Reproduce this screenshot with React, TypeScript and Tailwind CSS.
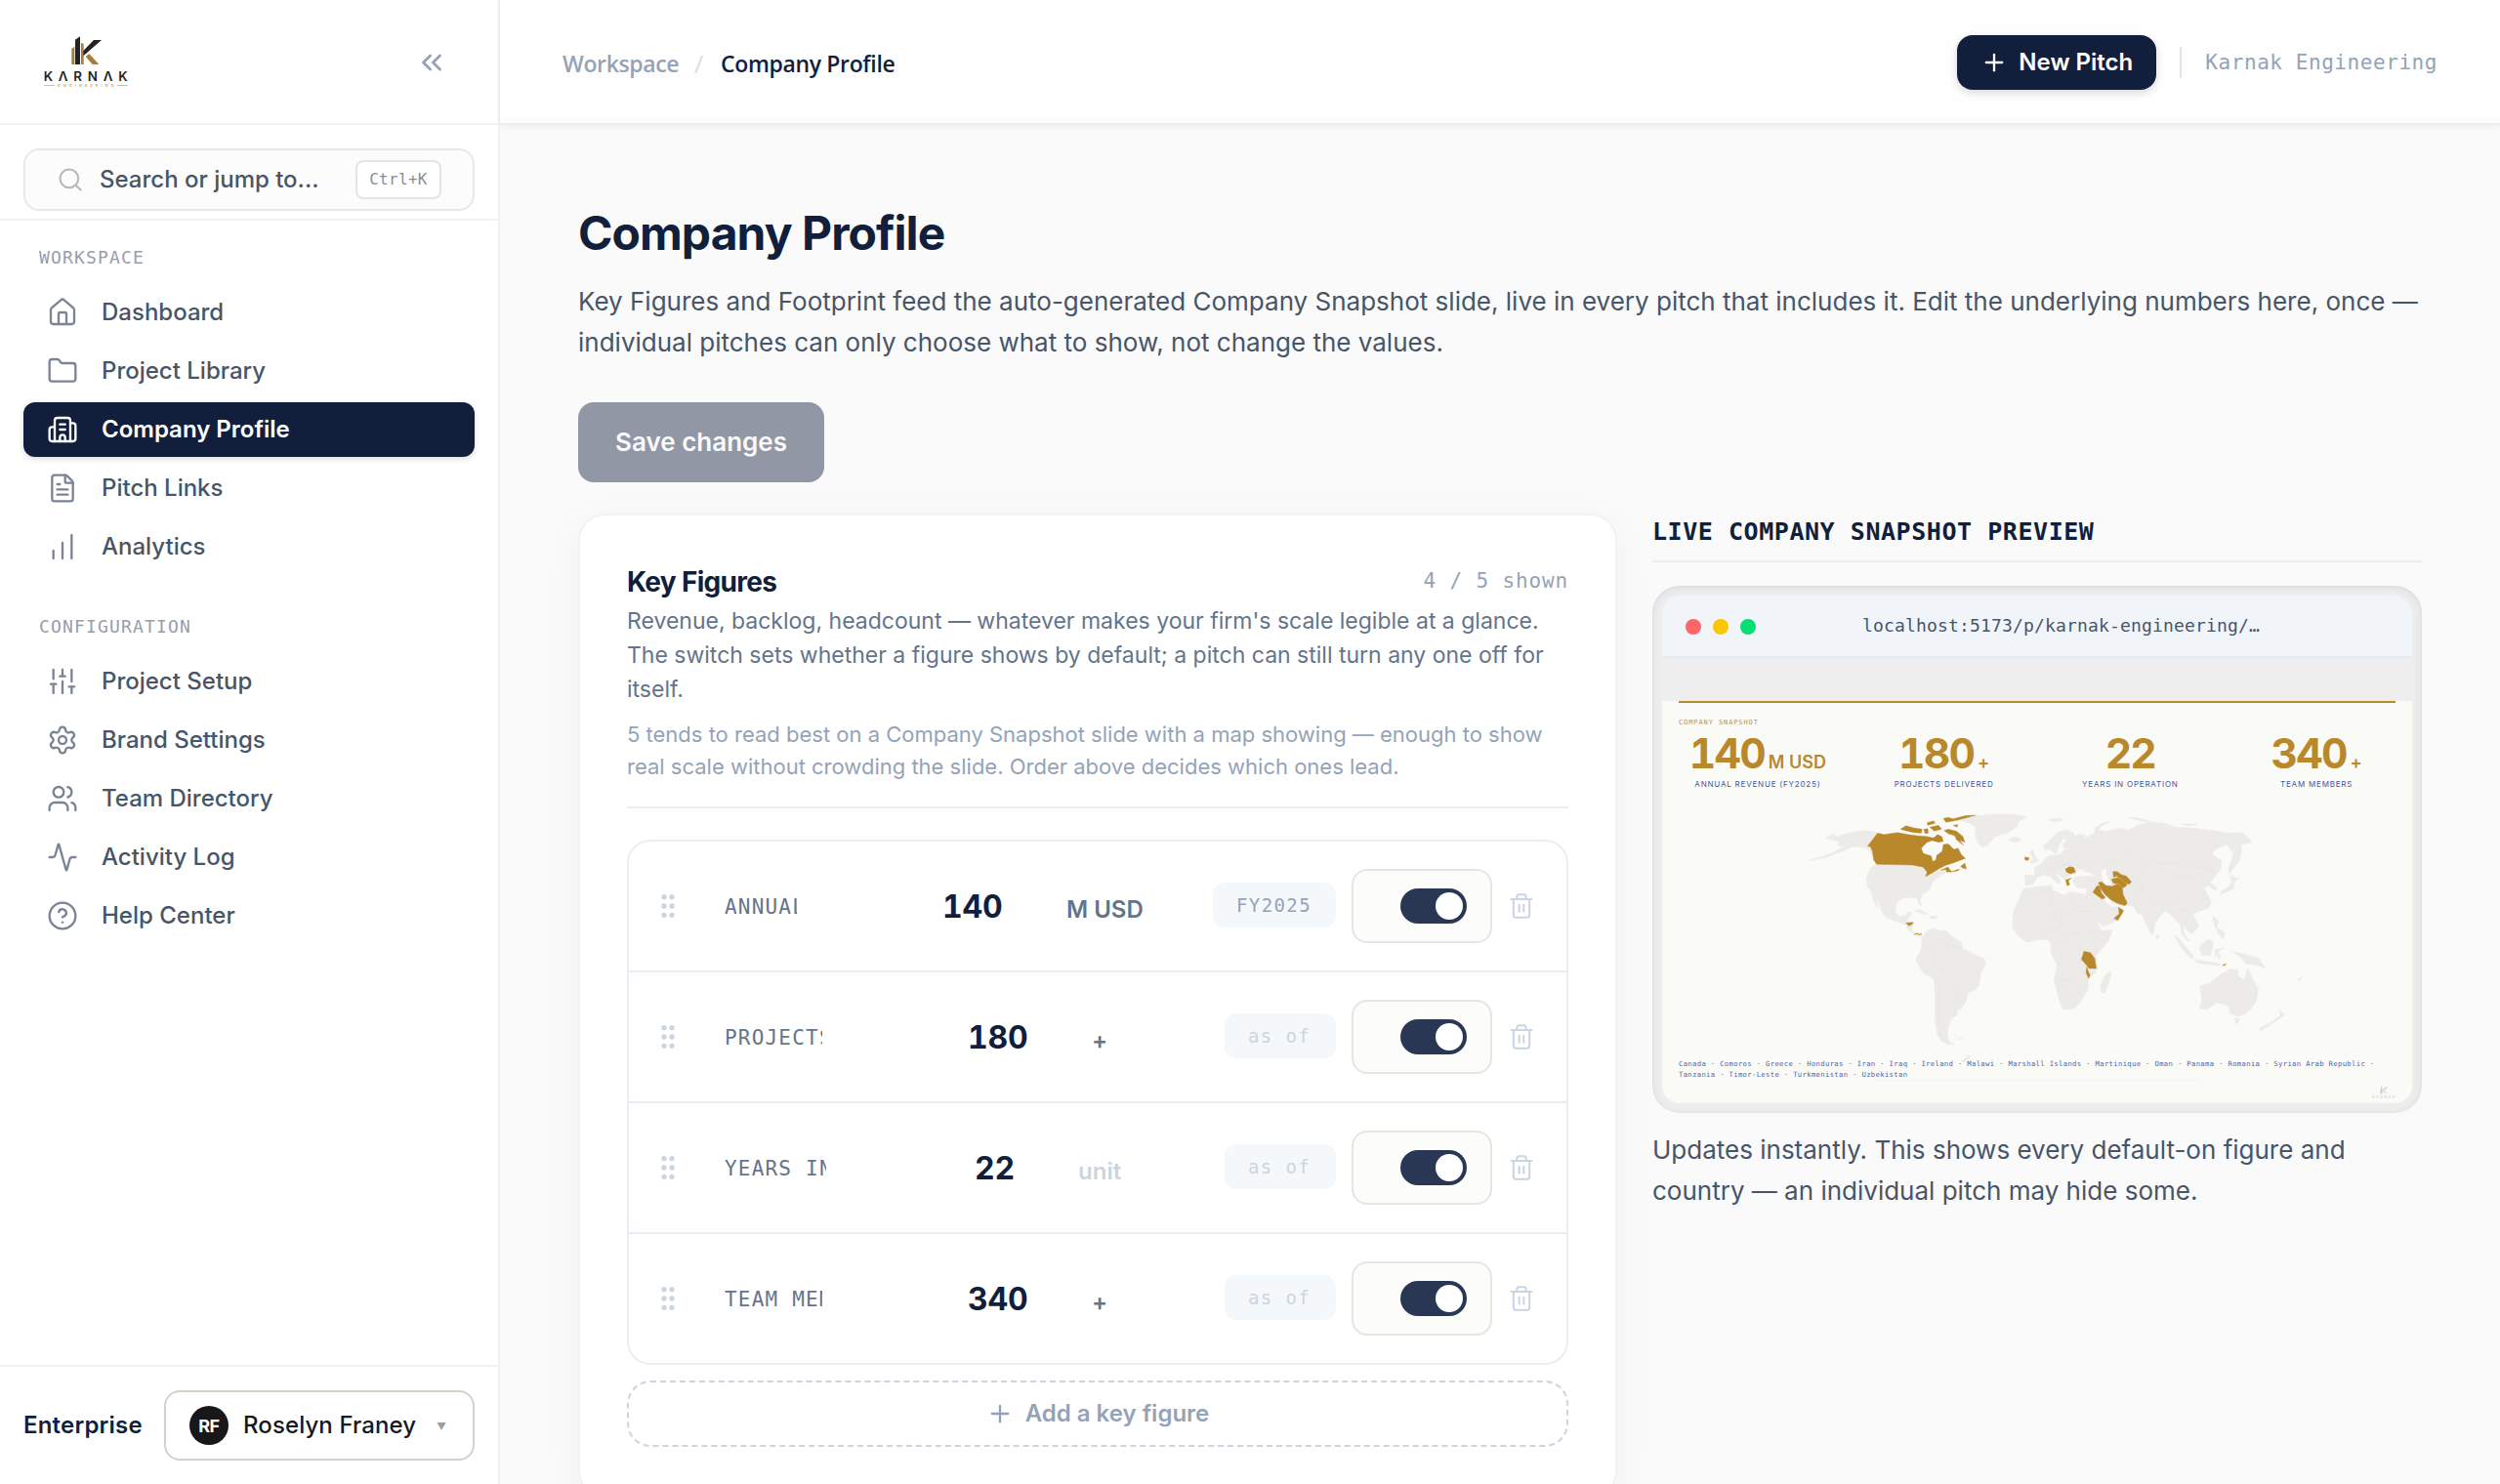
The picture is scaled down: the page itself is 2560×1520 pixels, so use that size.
import React from "react";
import {
  Activity,
  Building2,
  ChartNoAxesColumnIncreasing,
  ChevronsLeft,
  CircleQuestionMark,
  FileText,
  Folder,
  GripVertical,
  House,
  Plus,
  Search,
  Settings,
  SlidersVertical,
  Trash2,
  Users,
  type LucideIcon,
} from "lucide-react";

const MONO = "font-['DejaVu_Sans_Mono',monospace]";

function KarnakMark({ ink, gold }: { ink: string; gold: string }) {
  return (
    <g>
      <polygon points="220,150 229,143 229,198 220,198" fill={gold} />
      <polygon points="231,122 246,112 246,198 231,198" fill={ink} />
      <polygon points="249,131 257,135 257,198 249,198" fill={gold} />
      <polygon points="256,156 288,123 312,123 256,172" fill={ink} />
      <polygon points="263,174 274,165 304,198 284,198" fill={gold} />
    </g>
  );
}

function Logo() {
  return (
    <svg viewBox="132 108 264 162" className="h-[54px] w-[88px]" aria-label="Karnak Engineering">
      <KarnakMark ink="#242426" gold="#a87c3a" />
      <text x="134" y="248" fontFamily="Inter, sans-serif" fontSize="40" fontWeight="600" fill="#242426" textLength="258">
        KΛRNΛK
      </text>
      <rect x="135" y="261" width="33" height="2.5" fill="#cfb083" />
      <rect x="360" y="261" width="33" height="2.5" fill="#cfb083" />
      <text x="178" y="267" fontFamily="Inter, sans-serif" fontSize="12" fontWeight="600" fill="#c9a878" textLength="172">
        ENGINEERING
      </text>
    </svg>
  );
}

function NavItem({ icon: Icon, label, active }: { icon: LucideIcon; label: string; active?: boolean }) {
  return (
    <a
      className={
        active
          ? "flex h-[56px] items-center gap-[24px] rounded-[12px] bg-[#111f3d] px-[24px] text-white shadow-[0_2px_6px_rgba(0,0,0,0.14)]"
          : "flex h-[56px] items-center gap-[24px] rounded-[12px] px-[24px] text-[#475569]"
      }
    >
      <Icon size={32} strokeWidth={1.75} className={active ? "text-white" : "text-[#7a8496]"} />
      <span className={active ? "text-[24px] font-semibold leading-[32px]" : "text-[24px] font-medium leading-[32px]"}>
        {label}
      </span>
    </a>
  );
}

function NavHeading({ children }: { children: string }) {
  return (
    <div className={`${MONO} pl-[16px] text-[18px] leading-[24px] tracking-[1.16px] text-[#969eab]`}>{children}</div>
  );
}

function Sidebar() {
  return (
    <aside className="flex h-full w-[512px] shrink-0 flex-col border-r-2 border-[#f0f1f3] bg-white">
      <div className="flex h-[128px] items-center justify-between border-b-2 border-[#f0f1f3] pl-[44px] pr-[52px]">
        <Logo />
        <ChevronsLeft size={34} strokeWidth={2} className="-mr-px mt-[2px] text-[#94a3b8]" />
      </div>
      <div className="h-[98px] border-b-2 border-[#f0f1f3] px-[24px] pt-[24px]">
        <div className="flex h-[64px] w-[462px] items-center rounded-[16px] border-2 border-[#e8e8ea] bg-[#fcfcfc] pl-[32px] pr-[32px]">
          <Search size={28} strokeWidth={1.75} className="text-[#b5b7be]" />
          <span className="ml-[16px] flex-1 text-[24px] font-medium leading-[32px] text-[#475569]">
            Search or jump to...
          </span>
          <kbd
            className={`${MONO} flex h-[40px] w-[88px] items-center justify-center rounded-[8px] border-2 border-[#e4e4e7] bg-white text-[16px] font-normal tracking-[0.3px] text-[#8b8d96]`}
          >
            Ctrl+K
          </kbd>
        </div>
      </div>
      <nav className="flex flex-1 flex-col px-[24px] pt-[26px]">
        <NavHeading>WORKSPACE</NavHeading>
        <div className="mt-[16px] flex flex-col gap-[4px]">
          <NavItem icon={House} label="Dashboard" />
          <NavItem icon={Folder} label="Project Library" />
          <NavItem icon={Building2} label="Company Profile" active />
          <NavItem icon={FileText} label="Pitch Links" />
          <NavItem icon={ChartNoAxesColumnIncreasing} label="Analytics" />
        </div>
        <div className="mt-[42px]">
          <NavHeading>CONFIGURATION</NavHeading>
        </div>
        <div className="mt-[16px] flex flex-col gap-[4px]">
          <NavItem icon={SlidersVertical} label="Project Setup" />
          <NavItem icon={Settings} label="Brand Settings" />
          <NavItem icon={Users} label="Team Directory" />
          <NavItem icon={Activity} label="Activity Log" />
          <NavItem icon={CircleQuestionMark} label="Help Center" />
        </div>
      </nav>
      <div className="flex h-[122px] items-center justify-between border-t-2 border-[#f0f1f3] px-[24px]">
        <span className="text-[24px] font-semibold leading-[32px] tracking-[0.2px] text-[#111f3d]">Enterprise</span>
        <div className="flex h-[72px] w-[318px] items-center rounded-[16px] border-2 border-[#d6d1c8] bg-white pl-[24px]">
          <span className="flex size-[40px] items-center justify-center rounded-full bg-[#18181b] text-[18px] font-bold tracking-[-0.5px] text-white">
            RF
          </span>
          <span className="ml-[15px] w-[181px] whitespace-nowrap text-[24px] font-medium leading-[32px] tracking-[0.1px] text-[#18181b]">
            Roselyn Franey
          </span>
          <span className="ml-[17px] mt-[2px] text-[10px] leading-none text-[#9b9da6]">▼</span>
        </div>
      </div>
    </aside>
  );
}

function TopBar() {
  return (
    <header className="z-10 flex h-[128px] shrink-0 items-center justify-between border-b-2 border-[#ededee] bg-[#fefefe] pl-[64px] pr-[64px] pt-[2px] shadow-[0_2px_6px_rgba(0,0,0,0.05)]">
      <div className="flex items-center pt-[2px] font-['Open_Sans',sans-serif] text-[23px] font-semibold leading-[32px] tracking-[-0.35px]">
        <span className="w-[135px] text-[#94a3b8]">Workspace</span>
        <span className="w-[27px] text-[25px] font-normal text-[#d8dee8]">/</span>
        <span className="text-[#111f3d]">Company Profile</span>
      </div>
      <div className="flex items-center">
        <button className="flex h-[56px] w-[204px] items-center gap-[11px] rounded-[16px] bg-[#111f3d] pl-[24px] text-[24px] font-semibold text-white shadow-[0_3px_8px_rgba(0,0,0,0.16)]">
          <Plus size={28} strokeWidth={2} className="shrink-0" />
          <span className="whitespace-nowrap">New Pitch</span>
        </button>
        <div className="mx-[24px] h-[32px] w-[2px] bg-[#e2e4e8]" />
        <span className={`${MONO} text-[21px] leading-[32px] tracking-[0.56px] text-[#94a3b8]`}>Karnak Engineering</span>
      </div>
    </header>
  );
}

type Figure = {
  label: string;
  labelClass: string;
  value: string;
  valueClass: string;
  unit: string;
  unitClass: string;
  asOf?: string;
};

const figures: Figure[] = [
  {
    label: "ANNUAL REVENUE",
    labelClass: "w-[74px] mr-[149px]",
    value: "140",
    valueClass: "w-[127px]",
    unit: "M USD",
    unitClass: "text-[#64748b]",
    asOf: "FY2025",
  },
  {
    label: "PROJECTS DELIVERED",
    labelClass: "w-[100px] mr-[149px]",
    value: "180",
    valueClass: "w-[127px]",
    unit: "+",
    unitClass: "text-[#64748b]",
  },
  {
    label: "YEARS IN OPERATION",
    labelClass: "w-[104px] mr-[152px]",
    value: "22",
    valueClass: "w-[106px]",
    unit: "unit",
    unitClass: "text-[#cbd5e1]",
  },
  {
    label: "TEAM MEMBERS",
    labelClass: "w-[100px] mr-[149px]",
    value: "340",
    valueClass: "w-[127px]",
    unit: "+",
    unitClass: "text-[#64748b]",
  },
];

function FigureRow({ figure }: { figure: Figure }) {
  return (
    <div className="flex h-[134px] items-center border-b-2 border-[#e8eef4] pl-[24px] pr-[32px] last:h-[132px] last:border-b-0">
      <GripVertical size={32} className="shrink-0 text-[#cbd5e1]" />
      <div
        className={`${MONO} ${figure.labelClass} ml-[42px] mt-[2px] shrink-0 overflow-hidden whitespace-nowrap text-[21px] leading-[32px] tracking-[1.2px] text-[#64748b]`}
      >
        {figure.label}
      </div>
      <div className="mt-[2px] flex items-baseline">
        <span
          className={`${figure.valueClass} text-[32px] font-bold leading-[40px] tabular-nums tracking-[-0.2px] text-[#111f3d]`}
        >
          {figure.value}
        </span>
        <span className={`${figure.unitClass} text-[24px] font-semibold leading-[32px]`}>{figure.unit}</span>
      </div>
      <div className="ml-auto flex items-center">
        <span
          className={
            figure.asOf
              ? `${MONO} mb-[2px] h-[46px] w-[126px] rounded-[12px] bg-[#f4f8fb] pl-[24px] text-[19px] leading-[46px] tracking-[1.4px] text-[#94a3b8]`
              : `${MONO} mb-[2px] h-[46px] w-[114px] rounded-[12px] bg-[#f4f8fb] pl-[24px] text-[19px] leading-[46px] tracking-[1.4px] text-[#cbd5e1]`
          }
        >
          {figure.asOf ?? "as of"}
        </span>
        <div className="ml-[16px] flex h-[76px] w-[144px] items-center justify-end rounded-[16px] border-2 border-[#e6e6e0] bg-[#fcfcfa] pr-[24px]">
          <div className="flex h-[36px] w-[68px] items-center justify-end rounded-full bg-[#2a3754] pr-[4px]">
            <div className="size-[28px] rounded-full bg-white" />
          </div>
        </div>
        <Trash2 size={28} strokeWidth={1.75} className="ml-[16px] text-[#cbd5e1]" />
      </div>
    </div>
  );
}

function KeyFiguresCard() {
  return (
    <section className="h-[1008px] w-[1064px] rounded-[28px] border-2 border-[#f2f2f3] bg-white p-[48px] shadow-[0_8px_40px_rgba(0,0,0,0.04)]">
      <div className="h-[252px] border-b-2 border-[#e8eef4]">
        <div className="flex h-[40px] justify-between">
          <h2 className="text-[28px] font-bold leading-[40px] tracking-[-0.7px] text-[#111f3d]">Key Figures</h2>
          <span className={`${MONO} text-[21px] leading-[38px] tracking-[0.85px] text-[#94a3b8]`}>4 / 5 shown</span>
        </div>
        <p className="mt-[3px] whitespace-nowrap text-[23px] leading-[34.8px] text-[#64748b]">
          Revenue, backlog, headcount — whatever makes your firm's scale legible at a glance.
          <br />
          The switch sets whether a figure shows by default; a pitch can still turn any one off for
          <br />
          itself.
        </p>
        <p className="mt-[13px] whitespace-nowrap text-[22px] leading-[32.2px] text-[#94a3b8]">
          5 tends to read best on a Company Snapshot slide with a map showing — enough to show
          <br />
          real scale without crowding the slide. Order above decides which ones lead.
        </p>
      </div>
      <div className="mt-[32px] rounded-[24px] border-2 border-[#e8eef4]">
        {figures.map((f) => (
          <FigureRow key={f.label} figure={f} />
        ))}
      </div>
      <button className="mt-[16px] flex h-[68px] w-full items-center justify-center gap-[12px] rounded-[24px] border-2 border-dashed border-[#cbd5e1] text-[24px] font-semibold text-[#94a3b8]">
        <Plus size={28} strokeWidth={2} />
        Add a key figure
      </button>
    </section>
  );
}

const LAND = [
  "570,145 590,133 605,142 640,128 690,122 728,128 697,170 712,185 716,205 700,180 680,172 650,172 630,182 600,192 570,205 515,214 560,202 600,185 625,172 605,168 612,156",
  "722,227 835,228 868,236 880,250 875,264 900,252 925,242 938,250 915,265 895,282 890,300 865,320 858,335 863,355 855,348 850,330 820,328 800,332 785,345 765,330 740,322 710,312 697,295 693,270 705,240",
  "710,312 740,322 765,330 785,345 782,372 795,388 815,382 822,372 832,375 825,390 815,400 838,404 838,412 832,425 840,436 862,440 864,448 845,444 825,430 812,410 780,400 750,385 735,355 722,325 730,362 714,338",
  "985,92 1000,82 1040,76 1100,72 1145,72 1185,80 1160,95 1155,112 1130,128 1090,140 1065,168 1050,174 1035,160 1028,135 1030,110 1005,98",
  "1130,148 1150,142 1168,148 1160,156 1138,156",
  "865,450 880,430 900,424 915,430 940,430 960,450 985,465 990,485 1020,500 1055,515 1060,530 1045,560 1040,595 1030,610 1005,622 1000,645 985,670 970,675 975,688 960,695 950,710 945,730 942,750 948,770 962,778 945,780 925,770 912,750 905,700 905,640 902,580 870,560 850,530 847,515 858,495 865,475",
  "840,368 860,365 885,380 868,379",
  "888,386 910,385 908,392 890,392",
  "1198,220 1206,206 1194,190 1205,180 1210,198 1225,215 1202,224",
  "1236,170 1260,150 1280,128 1310,120 1330,130 1338,152 1322,176 1302,178 1296,166 1310,146 1296,148 1284,172 1276,194 1266,186 1255,178 1244,184",
  "1180,258 1210,260 1212,250 1210,235 1230,225 1245,205 1260,200 1290,195 1300,182 1325,178 1330,150 1340,135 1365,135 1360,147 1395,130 1396,114 1420,98 1442,96 1415,108 1405,120 1430,125 1470,115 1500,120 1530,105 1565,95 1610,100 1640,112 1700,115 1760,122 1800,130 1850,128 1878,158 1845,165 1845,190 1840,215 1820,240 1808,255 1806,235 1815,215 1820,190 1800,165 1765,180 1755,195 1785,215 1782,240 1765,262 1748,280 1772,300 1762,305 1745,290 1730,300 1745,325 1753,345 1745,360 1710,372 1695,378 1705,395 1715,415 1695,440 1680,430 1665,410 1670,440 1685,460 1680,462 1662,440 1658,410 1645,400 1630,380 1610,370 1595,385 1580,410 1575,440 1568,440 1550,405 1542,380 1525,375 1515,355 1492,352 1470,350 1450,345 1435,325 1415,310 1430,345 1450,357 1468,356 1484,370 1465,398 1420,418 1405,400 1385,370 1370,340 1368,320 1372,300 1340,298 1325,275 1335,265 1350,262 1390,262 1370,250 1355,240 1340,255 1328,255 1310,265 1312,285 1295,265 1272,252 1292,278 1282,286 1260,265 1240,258 1218,265 1205,287 1182,290",
  "1175,302 1215,295 1262,290 1265,305 1300,320 1320,310 1370,320 1378,345 1400,395 1415,430 1450,428 1435,465 1400,505 1403,550 1375,580 1375,610 1350,650 1330,670 1297,672 1285,640 1270,580 1280,540 1260,495 1262,470 1245,455 1220,458 1185,465 1160,445 1142,420 1145,372 1160,340",
  "1413,600 1422,575 1442,553 1445,566 1435,600 1425,622 1414,618",
  "1718,600 1750,590 1780,565 1810,548 1835,550 1835,570 1855,580 1865,545 1878,575 1897,610 1890,650 1860,685 1835,692 1812,685 1805,660 1770,650 1740,670 1717,670 1725,640",
  "1825,700 1843,700 1830,718",
  "1962,672 1978,690 1955,705 1905,738 1901,730 1940,710 1965,690",
  "1640,445 1652,452 1672,475 1700,512 1692,515 1660,482",
  "1700,520 1740,524 1782,532 1775,538 1710,528",
  "1716,480 1745,455 1760,468 1750,505 1725,506",
  "1765,488 1790,484 1774,494 1782,514 1774,514 1768,500 1764,514",
  "1820,495 1850,500 1900,515 1918,545 1890,535 1860,532 1842,510",
  "1758,385 1775,400 1770,420 1795,435 1790,455 1775,438 1762,412",
  "1812,258 1832,270 1842,268 1825,278 1822,300 1790,315 1782,320 1784,308 1806,296 1816,280",
  "1585,438 1593,450 1585,456",
  "1250,88 1285,84 1300,90 1270,95",
  "1500,82 1530,84 1565,94 1540,94",
  "1660,102 1710,102 1690,107",
  "975,762 990,760 984,765",
  "985,832 1008,812 1012,818 995,834",
  "2018,578 2032,574 2024,584",
];

const WATER = [
  "1415,245 1432,240 1430,256 1446,290 1430,292 1418,270",
  "1338,246 1355,240 1362,250 1380,252 1392,262 1350,262 1338,258",
];

const GOLD = [
  "697,170 728,130 748,134 790,128 822,134 850,138 880,140 900,145 912,134 925,140 930,155 916,158 895,153 880,158 862,176 868,192 893,200 897,217 906,214 910,198 926,186 930,165 945,163 962,180 975,176 985,196 998,208 975,216 960,222 940,228 920,238 900,250 875,264 880,250 868,235 835,228 725,226 716,212 712,185 705,172",
  "932,122 945,118 970,124 990,140 996,158 980,152 992,168 970,150 965,138 946,132",
  "798,118 815,107 840,114 865,118 862,130 838,128 812,122",
  "930,85 945,82 960,86 1000,76 1030,75 1005,82 975,90 938,97",
  "880,98 900,92 905,100 882,106",
  "888,112 915,106 925,118 902,124",
  "870,118 882,116 884,130 874,132",
  "960,106 975,104 972,112",
  "983,232 996,222 1001,240 990,238",
  "922,244 944,234 955,248 940,250 938,242",
  "950,250 980,240 975,246",
  "1181,203 1194,206 1190,214 1180,212",
  "815,406 838,404 832,412 824,415",
  "1305,240 1318,233 1330,235 1336,250 1320,255 1308,250",
  "1306,274 1324,268 1314,276 1318,288 1310,292",
  "1389,312 1402,292 1410,294 1416,314 1428,328 1418,333",
  "1406,282 1416,280 1430,291 1448,293 1465,286 1480,293 1482,318 1495,345 1488,353 1465,346 1445,335 1425,317 1412,298",
  "1446,272 1466,266 1492,282 1494,290 1484,298 1468,286 1452,284",
  "1451,248 1464,248 1476,257 1492,262 1508,280 1500,288 1480,274 1462,262 1453,266",
  "1468,358 1484,368 1466,398 1454,392 1470,378",
  "1362,493 1382,497 1395,515 1400,546 1378,546 1368,534 1354,518",
  "1371,540 1375,555 1381,566 1376,576 1368,558",
  "1786,537 1798,531 1796,536",
];

const BORDERS = [
  "1145,372 1190,345 1235,415 1200,430 1160,420",
  "1190,345 1170,330 1262,300 1262,355 1290,375 1325,365 1325,330",
  "1235,415 1260,385 1290,375 1295,410 1270,430 1225,435",
  "1325,370 1395,370",
  "1295,410 1315,440 1300,470 1262,470",
  "1315,440 1360,435 1395,425 1440,450 1400,470 1395,505",
  "1300,470 1290,520 1275,545 1325,560 1355,520",
  "1270,578 1330,582 1355,560 1400,560",
  "1310,582 1315,635 1340,625 1365,605",
  "1403,250 1420,222 1470,212 1490,198 1560,225 1545,265 1510,265",
  "1565,225 1650,222 1700,235 1755,240 1690,265 1620,260 1565,228",
  "1690,222 1720,208 1755,240 1765,262",
  "1530,275 1550,310 1575,332 1625,345 1640,335 1660,370",
  "1500,290 1540,300 1525,330 1515,355",
  "1575,332 1600,350 1640,350",
  "1660,370 1690,365 1700,380",
  "1240,230 1265,240 1300,225 1335,225 1380,235",
  "1290,197 1300,225 1290,250",
  "1325,178 1340,205 1380,225",
  "885,440 900,460 935,465 960,450",
  "865,475 890,480 900,510 885,520 905,545 940,555 955,590 975,610",
  "902,580 915,600 950,605 975,620 970,650 1000,640",
  "915,600 915,700 925,765",
  "935,465 945,480 985,475",
];

function WorldMap() {
  return (
    <svg viewBox="117 60 2202 840" className="block h-[280px] w-[734px]">
      <g fill="#edebe7">
        {LAND.map((p) => (
          <polygon key={p} points={p} strokeLinejoin="round" stroke="#edebe7" strokeWidth="2" />
        ))}
      </g>
      <g fill="none" stroke="#e3e2dd" strokeWidth="1.5" strokeLinejoin="round">
        {BORDERS.map((p) => (
          <polyline key={p} points={p} />
        ))}
      </g>
      <g fill="#fafbf6">
        {WATER.map((p) => (
          <polygon key={p} points={p} />
        ))}
      </g>
      <g fill="#b8882b" stroke="#b8882b" strokeWidth="1">
        {GOLD.map((p) => (
          <polygon key={p} points={p} />
        ))}
      </g>
      <path d="M841 442l8-4 8 4 7-3" fill="none" stroke="#b8882b" strokeWidth="3" />
      <path d="M715 889H1715" stroke="#f4f4ef" strokeWidth="2" />
    </svg>
  );
}

const slideStats = [
  { value: "140", unit: "M USD", label: "ANNUAL REVENUE (FY2025)" },
  { value: "180", unit: "+", label: "PROJECTS DELIVERED" },
  { value: "22", unit: "", label: "YEARS IN OPERATION" },
  { value: "340", unit: "+", label: "TEAM MEMBERS" },
];

function SnapshotPreview() {
  return (
    <section className="w-[788px]">
      <h3
        className={`${MONO} h-[50px] border-b-2 border-[#ececed] text-[25px] font-bold leading-[38px] tracking-[0.55px] text-[#111f3d]`}
      >
        LIVE COMPANY SNAPSHOT PREVIEW
      </h3>
      <div className="mt-[24px] h-[540px] rounded-[28px] bg-[#ededed] p-[10px] shadow-[inset_0_2px_8px_rgba(0,0,0,0.07),inset_0_0_0_1px_rgba(0,0,0,0.02)]">
        <div className="flex h-[520px] flex-col overflow-hidden rounded-[18px] bg-[#eeeeee]">
          <div className="flex h-[64px] shrink-0 items-center border-b-2 border-[#e2eaf3] bg-[#f1f5fa] pl-[24px]">
            <div className="flex w-[181px] gap-[12px] pt-[2px]">
              <span className="size-[16px] rounded-full bg-[#ff6467]" />
              <span className="size-[16px] rounded-full bg-[#fdc700]" />
              <span className="size-[16px] rounded-full bg-[#05df72]" />
            </div>
            <span className={`${MONO} -mt-px text-[18px] leading-[24px] tracking-[0.16px] text-[#475569]`}>
              localhost:5173/p/karnak-engineering/…
            </span>
          </div>
          <div className="mt-[44px] flex h-[412px] flex-col bg-[#fafbf6] px-[17px]">
            <div className="h-[2px] bg-[#b8882b]" />
            <div className={`${MONO} mt-[15px] h-[10px] text-[7px] leading-[10px] tracking-[0.9px] text-[#c3933b]`}>
              COMPANY SNAPSHOT
            </div>
            <div className="mt-[2px] grid h-[68px] grid-cols-4 gap-x-[29px]">
              {slideStats.map((s) => (
                <div key={s.label} className="flex flex-col items-center whitespace-nowrap">
                  <div className="flex items-baseline gap-[4px] text-[#b8882b]">
                    <span className="text-[42.5px] font-bold leading-[50px] tabular-nums tracking-[-1.8px]">{s.value}</span>
                    {s.unit && <span className="text-[18px] font-semibold">{s.unit}</span>}
                  </div>
                  <div className="text-[8px] leading-[12px] tracking-[0.8px] text-[#3f57a3]">{s.label}</div>
                </div>
              ))}
            </div>
            <div className="-mb-[26px] mt-[15px]">
              <WorldMap />
            </div>
            <div className={`${MONO} whitespace-nowrap text-[7.2px] leading-[11px] tracking-[0.36px] text-[#4d64ac]`}>
              Canada · Comoros · Greece · Honduras · Iran · Iraq · Ireland · Malawi · Marshall Islands · Martinique · Oman ·
              Panama · Romania · Syrian Arab Republic ·
              <br />
              Tanzania · Timor-Leste · Turkmenistan · Uzbekistan
            </div>
            <div className="mt-[6px] flex justify-end">
              <svg viewBox="132 108 264 144" className="h-[13px] w-[24px]">
                <KarnakMark ink="#cfcfcc" gold="#dedcd6" />
                <text x="134" y="248" fontFamily="Inter, sans-serif" fontSize="40" fontWeight="600" fill="#d4d4d0" textLength="258">
                  KΛRNΛK
                </text>
              </svg>
            </div>
          </div>
        </div>
      </div>
      <p className="mt-[17px] whitespace-nowrap text-[26px] leading-[42px] text-[#475569]">
        Updates instantly. This shows every default-on figure and
        <br />
        country — an individual pitch may hide some.
      </p>
    </section>
  );
}

export default function App() {
  return (
    <div className="flex h-[1520px] w-[2560px] overflow-hidden bg-[#fafafa] font-['Inter',sans-serif]">
      <Sidebar />
      <div className="flex min-w-0 flex-1 flex-col">
        <TopBar />
        <main className="flex-1 overflow-hidden px-[80px] pt-[81px]">
          <h1 className="text-[48px] font-bold leading-[60px] tracking-[-0.96px] text-[#111f3d]">Company Profile</h1>
          <p className="mt-[19px] whitespace-nowrap text-[26px] leading-[42px] text-[#475569]">
            Key Figures and Footprint feed the auto-generated Company Snapshot slide, live in every pitch that includes it. Edit
            the underlying numbers here, once —
            <br />
            individual pitches can only choose what to show, not change the values.
          </p>
          <button className="mt-[40px] flex h-[82px] w-[252px] items-center justify-center rounded-[16px] bg-[#9197a5] pb-[2px] text-[26px] font-semibold text-[#fafafa]">
            Save changes
          </button>
          <div className="mt-[32px] flex items-start justify-between">
            <KeyFiguresCard />
            <SnapshotPreview />
          </div>
        </main>
      </div>
    </div>
  );
}
